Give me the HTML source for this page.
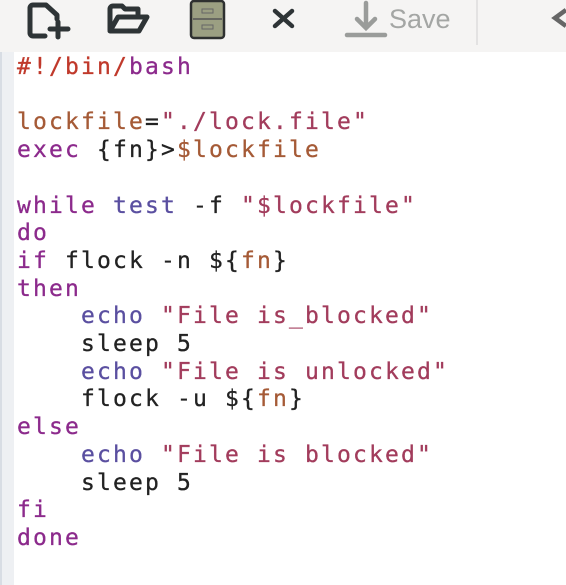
<!DOCTYPE html>
<html><head><style>
html,body{margin:0;padding:0;width:566px;height:585px;overflow:hidden;background:#fff;}
.tb{position:absolute;left:0;top:0;width:566px;height:52px;background:#f5f4f3;}
.gut{position:absolute;left:0;top:52px;width:14px;height:533px;background:#eef0f3;border-left:2px solid #d8dde4;box-sizing:border-box;}
pre{position:absolute;left:17px;top:54px;margin:0;font-family:"DejaVu Sans Mono","Liberation Mono",monospace;font-size:23px;letter-spacing:2.15px;line-height:27.7px;color:#222;-webkit-text-stroke:0.3px;}
.k{color:#8c2a8c}.b{color:#5a4fa0}.s{color:#a23c5c}.v{color:#a55a36}.r{color:#c0392b}
</style></head><body>
<div class="tb">
<svg width="566" height="52" style="position:absolute;left:0;top:0">
<g fill="none" stroke="#2e3436" stroke-width="5" stroke-linecap="round" stroke-linejoin="round">
<path d="M30 30 V8 a3 3 0 0 1 3-3 H46 L57 15 V19"/><path d="M30 30 V33 a3 3 0 0 0 3 3 H45"/>
<path d="M58 22 V37 M50 29 H68"/>
<path d="M110 30 V9 a3 3 0 0 1 3-3 h9 l3 3 h13 v5 M110 31 l8-14 h29 l-8 14 z"/>
<path d="M275 11 L292 26 M292 11 L275 26" stroke-width="4.5"/>
</g>
<rect x="191" y="1" width="33" height="37" rx="3" fill="#9b9f82" stroke="#2e3030" stroke-width="2.5"/>
<line x1="193" y1="19" x2="222" y2="19" stroke="#555" stroke-width="1.5"/>
<rect x="202" y="9" width="11" height="4" fill="none" stroke="#666"/><rect x="202" y="25" width="11" height="4" fill="none" stroke="#666"/>
<g stroke="#9a9c9a" stroke-width="4.5" fill="none" stroke-linecap="round"><path d="M366 3 V27 M357 19 l9 9 9-9"/><path d="M347 35 H385"/></g>
<text x="389" y="28" font-family="Liberation Sans,sans-serif" font-size="27" fill="#a4a6a4">Save</text>
<line x1="477" y1="0" x2="477" y2="45" stroke="#ddd" stroke-width="1.5"/>
<path d="M566 10 L555 18 L566 26" fill="none" stroke="#666" stroke-width="4.5"/>
</svg>
</div>
<div class="gut"></div>
<pre><span class="r">#!/bin/</span><span class="k">bash</span>

<span class="v">lockfile</span>=<span class="s">"./lock.file"</span>
<span class="k">exec</span> {fn}&gt;<span class="v">$lockfile</span>

<span class="k">while</span> <span class="b">test</span> -f <span class="s">"$lockfile"</span>
<span class="k">do</span>
<span class="k">if</span> flock -n ${<span class="v">fn</span>}
<span class="k">then</span>
    <span class="b">echo</span> <span class="s">"File is_blocked"</span>
    sleep 5
    <span class="b">echo</span> <span class="s">"File is unlocked"</span>
    flock -u ${<span class="v">fn</span>}
<span class="k">else</span>
    <span class="b">echo</span> <span class="s">"File is blocked"</span>
    sleep 5
<span class="k">fi</span>
<span class="k">done</span></pre>
</body></html>
